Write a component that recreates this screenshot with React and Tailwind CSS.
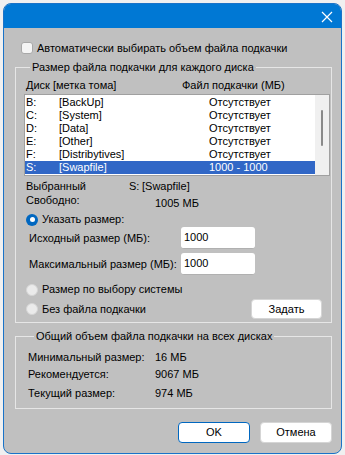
import React from "react";

const F = { fontFamily: '"Liberation Sans", Arial, sans-serif' };

function Radio({ checked }) {
  return checked ? (
    <span className="w-[12px] h-[12px] rounded-full bg-[#0067c0] flex items-center justify-center shrink-0">
      <span className="w-[5px] h-[5px] rounded-full bg-white" />
    </span>
  ) : (
    <span className="w-[12px] h-[12px] rounded-full bg-[#ebebeb] border border-[#d6d6d6] shrink-0" />
  );
}

const rows = [
  ["B:", "[BackUp]", "Отсутствует"],
  ["C:", "[System]", "Отсутствует"],
  ["D:", "[Data]", "Отсутствует"],
  ["E:", "[Other]", "Отсутствует"],
  ["F:", "[Distribytives]", "Отсутствует"],
  ["S:", "[Swapfile]", "1000 - 1000"],
];

export default function App() {
  return (
    <div className="w-[345px] h-[455px] bg-[#f0f0f0] p-[3px] text-[11px] leading-[13px] text-black whitespace-nowrap" style={F}>
      <div className="w-[339px] h-[451px] rounded-[8px] border border-[#1a73c8] bg-[#c0c0c0] overflow-hidden flex flex-col">
        <div className="h-[24px] bg-[#0078d4] flex items-center justify-end pr-[8px] shrink-0">
          <svg width="12" height="12" viewBox="0 0 12 12" className="mt-[1px]">
            <path d="M1 1 L11 11 M11 1 L1 11" stroke="white" strokeWidth="1.2" />
          </svg>
        </div>
        <div className="flex flex-col pl-[11px] pr-[9px]">
          <div className="flex items-center gap-[4px] mt-[14px] ml-[6px] h-[12px]">
            <span className="w-[12px] h-[12px] rounded-[3px] bg-[#f5f5f5] border border-[#a8a8a8]" />
            <span>Автоматически выбирать объем файла подкачки</span>
          </div>

          <fieldset className="border border-[#e6e6e6] mt-[7px] h-[262px] pl-[8px] pr-0">
            <legend className="ml-[6px] px-[2px]">Размер файла подкачки для каждого диска</legend>
            <div className="flex mt-[5px] ml-[2px]">
              <span className="w-[156px]">Диск [метка тома]</span>
              <span>Файл подкачки (МБ)</span>
            </div>
            <div className="mt-[2px] mr-[1px] h-[82px] bg-white border border-[#a0a0a0] flex">
              <div className="flex-1 pt-[1px] flex flex-col">
                {rows.map((r, i) => (
                  <div
                    key={i}
                    className={
                      "flex h-[13px] items-center " +
                      (i === 5 ? "bg-[#3167c6] text-white" : "")
                    }
                  >
                    <span className="w-[34px] pl-[1px]">{r[0]}</span>
                    <span className="w-[150px]">{r[1]}</span>
                    <span>{r[2]}</span>
                  </div>
                ))}
              </div>
              <div className="w-[14px] bg-[#f0f0f0] flex justify-center pt-[15px]">
                <div className="w-[2px] h-[36px] bg-[#8a8a8a] rounded-full" />
              </div>
            </div>

            <div className="flex mt-[4px] ml-[2px]">
              <span className="w-[103px]">Выбранный</span>
              <span className="w-[13px]">S:</span>
              <span>[Swapfile]</span>
            </div>
            <div className="flex mt-[1px] ml-[2px]">
              <span className="w-[129px]">Свободно:</span>
              <span className="mt-[3px]">1005 МБ</span>
            </div>

            <div className="flex items-center gap-[4px] mt-[3px] ml-[2px]">
              <Radio checked />
              <span>Указать размер:</span>
            </div>
            <div className="flex items-center mt-[1px] ml-[5px]">
              <span className="w-[152px]">Исходный размер (МБ):</span>
              <div className="w-[74px] h-[22px] bg-white rounded-[3px] border-b border-[#b0b0b0] flex items-center pl-[3px]">1000</div>
            </div>
            <div className="flex items-center mt-[4px] ml-[5px]">
              <span className="w-[152px]">Максимальный размер (МБ):</span>
              <div className="w-[74px] h-[22px] bg-white rounded-[3px] border-b border-[#b0b0b0] flex items-center pl-[3px]">1000</div>
            </div>

            <div className="flex items-center gap-[4px] mt-[8px] ml-[2px]">
              <Radio />
              <span>Размер по выбору системы</span>
            </div>
            <div className="flex items-center justify-between mt-[3px] ml-[2px] mr-[9px]">
              <div className="flex items-center gap-[4px]">
                <Radio />
                <span>Без файла подкачки</span>
              </div>
              <div className="w-[71px] h-[20px] bg-white rounded-[4px] border border-[#d5d5d5] flex items-center justify-center">Задать</div>
            </div>
          </fieldset>

          <fieldset className="border border-[#e6e6e6] mt-[7px] h-[79px] pl-[12px]">
            <legend className="ml-[6px] px-[2px]">Общий объем файла подкачки на всех дисках</legend>
            <div className="flex mt-[8px]">
              <span className="w-[127px]">Минимальный размер:</span>
              <span>16 МБ</span>
            </div>
            <div className="flex mt-[4px]">
              <span className="w-[127px]">Рекомендуется:</span>
              <span>9067 МБ</span>
            </div>
            <div className="flex mt-[6px]">
              <span className="w-[127px]">Текущий размер:</span>
              <span>974 МБ</span>
            </div>
          </fieldset>

          <div className="flex justify-end gap-[10px] mt-[13px]">
            <div className="w-[72px] h-[21px] bg-white rounded-[4px] border border-[#0067c0] flex items-center justify-center">OK</div>
            <div className="w-[72px] h-[21px] bg-white rounded-[4px] border border-[#d5d5d5] flex items-center justify-center">Отмена</div>
          </div>
        </div>
      </div>
    </div>
  );
}
